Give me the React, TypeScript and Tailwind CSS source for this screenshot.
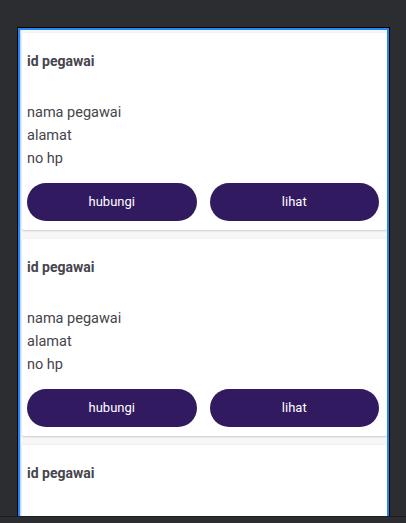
import React from "react";

function Card({ partial = false }: { partial?: boolean }) {
  return (
    <div className="h-[198px] shrink-0 bg-white border-t border-[#f6eef8] rounded-[2px] shadow-[0_1px_2px_rgba(0,0,0,0.18)] pl-[5px] pr-[8px] pt-[18px] flex flex-col">
      <div className="h-[20px] leading-[20px] text-[14px] font-bold text-[#46444c]">id pegawai</div>
      {!partial && (
        <>
          <div className="mt-[30px] flex flex-col text-[14.5px] text-[#46444c]">
            <div className="h-[23px] leading-[23px]">nama pegawai</div>
            <div className="h-[23px] leading-[23px]">alamat</div>
            <div className="h-[23px] leading-[23px]">no hp</div>
          </div>
          <div className="mt-[13px] flex gap-[13px]">
            <button className="flex-1 h-[38px] rounded-full bg-[#311a5f] text-white text-[13px] font-normal">hubungi</button>
            <button className="flex-1 h-[38px] rounded-full bg-[#311a5f] text-white text-[13px] font-normal">lihat</button>
          </div>
        </>
      )}
    </div>
  );
}

export default function App() {
  return (
    <div className="w-[406px] h-[523px] bg-[#2b2d30] flex flex-col overflow-hidden" style={{ fontFamily: "Roboto, 'Noto Sans', sans-serif" }}>
      <div className="h-[27px] shrink-0" />
      <div className="flex-1 min-h-0 ml-[17px] w-[373px] border border-black border-b-0 overflow-hidden">
        <div className="h-full border-2 border-[#2386f5] border-b-0 overflow-hidden">
          <div className="h-full bg-[#f7f7f8] border-l border-[#bcd6f7] pl-[1px] pt-[2px] flex flex-col gap-[8px] overflow-hidden">
            <Card />
            <Card />
            <Card partial />
          </div>
        </div>
      </div>
      <div className="h-[7px] shrink-0 border-t border-[#1c1d20] bg-[#2b2d30]" />
    </div>
  );
}
